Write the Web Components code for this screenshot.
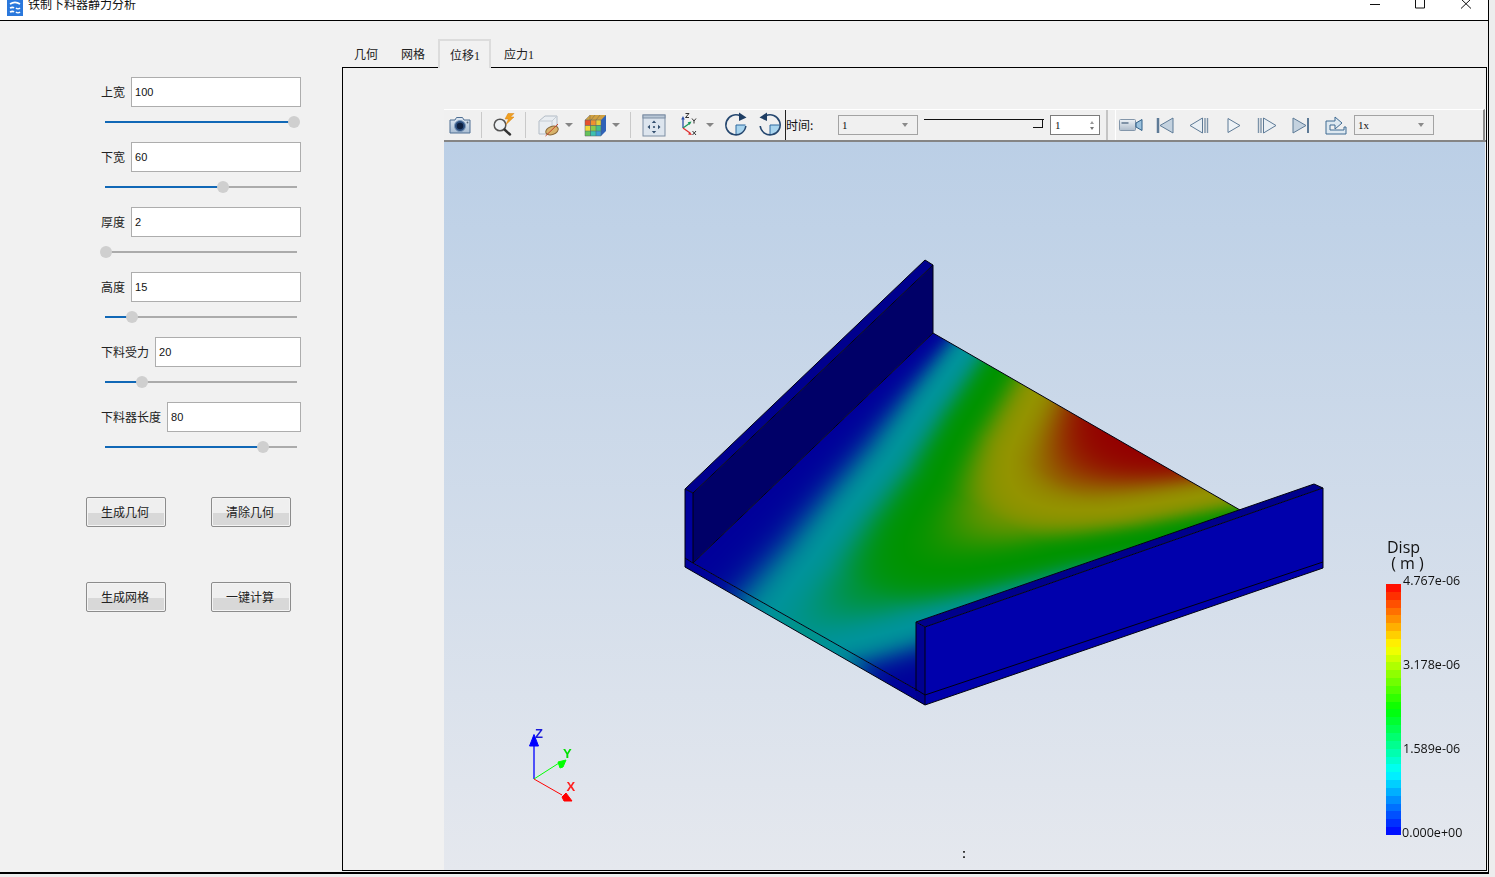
<!DOCTYPE html>
<html lang="zh-CN">
<head>
<meta charset="utf-8">
<title>铁制下料器静力分析</title>
<style>
  html, body { margin: 0; height: 100%; overflow: hidden; background: #ededed; }
  body { font-family: "Noto Sans CJK SC", "Liberation Sans", sans-serif; }
</style>
</head>
<body>
<app-window></app-window>

<script>
const CJK = '"Noto Sans CJK SC", sans-serif';

// title bar, cut off at the top edge of the screenshot
class TitleBar extends HTMLElement {
  constructor() {
    super();
    this.attachShadow({ mode: 'open' }).innerHTML = `
      <style>
        :host {
          display: flex;
          align-items: flex-end;
          height: 20px;
          box-sizing: border-box;
          padding: 0 0 8px 7px;
          background: #fff;
          overflow: hidden;
          font: 12px/16px ${CJK};
          color: #111;
        }
        .logo { width: 16px; height: 16px; flex: none; margin-bottom: -4px; }
        .name { margin-left: 5px; margin-bottom: 0; }
        .ctl { margin-left: auto; width: 120px; height: 20px; flex: none; margin-bottom: -8px; }
      </style>
      <svg class="logo" viewBox="0 0 16 16">
        <rect width="16" height="16" fill="#2a78dc"/>
        <path d="M3 4c3-2 7-2 10 0M3 8c2-1 3-1 4 0M9 8c1 1 3 1 4 0M3 12c2-1 3-1 4 0M9 12c1 1 3 1 4 0" stroke="#fff" stroke-width="1.600" fill="none"/>
      </svg>
      <span class="name">铁制下料器静力分析</span>
      <svg class="ctl" viewBox="0 0 120 20">
        <path d="M2 4.500h10" stroke="#111" fill="none"/>
        <path d="M47.500 -3h9v11h-9z" stroke="#111" fill="none"/>
        <path d="M93 -1l10 9.500M103 -1l-10 9.500" stroke="#111" fill="none"/>
      </svg>`;
  }
}
customElements.define('title-bar', TitleBar);

class ParamField extends HTMLElement {
  constructor() {
    super();
    this.attachShadow({ mode: 'open' });
  }
  connectedCallback() {
    const pos = this.getAttribute('pos');
    this.shadowRoot.innerHTML = `
      <style>
        :host { display: block; height: 65px; margin-left: 101px; width: 200px; }
        .row { display: flex; align-items: center; gap: 6px; height: 30px; }
        .label { font: 12px/16px ${CJK}; color: #222; white-space: nowrap; }
        .input {
          flex: 1; height: 30px; box-sizing: border-box;
          border: 1px solid #adadad; background: #fff;
          padding: 0 3px; font: 11px/28px "Liberation Sans", sans-serif; color: #111;
        }
        .slider { position: relative; width: 192px; height: 2px; margin: 14px 0 0 4px; background: #ababab; }
        .fill { height: 2px; background: #1168b6; width: ${pos}px; }
        .knob {
          position: absolute; top: -5px; left: ${pos - 6}px; width: 12px; height: 12px;
          border-radius: 50%; background: #cfcfcf;
        }
      </style>
      <div class="row">
        <span class="label">${this.getAttribute('label')}</span>
        <div class="input">${this.getAttribute('value')}</div>
      </div>
      <div class="slider"><div class="fill"></div><div class="knob"></div></div>`;
  }
}
customElements.define('param-field', ParamField);

class PushButton extends HTMLElement {
  constructor() {
    super();
    this.attachShadow({ mode: 'open' }).innerHTML = `
      <style>
        :host {
          display: block; width: 80px; height: 30px; box-sizing: border-box;
          border: 1px solid #8c8c8c; border-radius: 2px; padding-right: 2px;
          background: linear-gradient(#efefef 0, #efefef 15px, #d8d8d8 15px, #d8d8d8 100%);
          box-shadow: inset 0 0 0 1px #f4f4f4;
          text-align: center; font: 12px/28px ${CJK}; color: #222;
        }
      </style>
      <slot></slot>`;
  }
}
customElements.define('push-button', PushButton);

class ParamPanel extends HTMLElement {
  constructor() {
    super();
    this.attachShadow({ mode: 'open' }).innerHTML = `
      <style>
        :host { display: block; width: 342px; flex: none; padding-top: 56px; box-sizing: border-box; }
        .btns {
          display: grid; grid-template-columns: 80px 80px; column-gap: 45px; row-gap: 55px;
          margin: 30px 0 0 86px;
        }
      </style>
      <param-field label="上宽" value="100" pos="189"></param-field>
      <param-field label="下宽" value="60" pos="118"></param-field>
      <param-field label="厚度" value="2" pos="1"></param-field>
      <param-field label="高度" value="15" pos="27"></param-field>
      <param-field label="下料受力" value="20" pos="37"></param-field>
      <param-field label="下料器长度" value="80" pos="158"></param-field>
      <div class="btns">
        <push-button>生成几何</push-button>
        <push-button>清除几何</push-button>
        <push-button>生成网格</push-button>
        <push-button>一键计算</push-button>
      </div>`;
  }
}
customElements.define('param-panel', ParamPanel);

// the blue quarter both rotate buttons have in the middle of the circle
const QUARTER = `<path d="M12 12h9.500A9.500 9.500 0 0 1 12 21.500z" fill="#a8d4ee"/><path d="M12 12v9.500M12 12h9.500" stroke="#2f6aa0" fill="none"/>`;

// 24x24 toolbar pictures
const ICONS = {
  camera: `<defs><linearGradient id="cam" x1="0" y1="0" x2="0" y2="1"><stop offset="0" stop-color="#dfe9f3"/><stop offset="1" stop-color="#a9bdd3"/></linearGradient></defs>
    <path d="M2 7h5l1.500-2.500h6L16 7h6v13H2z" fill="url(#cam)" stroke="#4f6f93" stroke-linejoin="round"/>
    <circle cx="12" cy="13" r="5.500" fill="#2c4f7f" stroke="#7f9cbd"/><circle cx="12" cy="13" r="3.200" fill="#0d1f3f"/>
    <circle cx="19.500" cy="9.500" r="0.900" fill="#567"/>`,
  search: `<circle cx="9" cy="12" r="5.800" fill="#eef1f4" stroke="#555" stroke-width="1.500"/>
    <path d="M13.500 16.500l5.500 5" stroke="#333" stroke-width="2.400" stroke-linecap="round"/>
    <path d="M17 0.500l6 0-3.500 3.500h3.500l-8 7.500 2.500-5.500h-3.500z" fill="#f0a020" stroke="#d98010" stroke-width="0.500"/>`,
  clipbox: `<path d="M3 8l6-5h12v13l-5 5H3z" fill="#e9edf1" stroke="#b3bcc6"/><path d="M3 8h13v13M16 8l5-5" stroke="#c4ccd4" fill="none"/>
    <ellipse cx="16" cy="17.500" rx="6.500" ry="4" fill="#d8b26a" stroke="#8a6a3a" transform="rotate(-20 16 17.500)"/>
    <path d="M9.500 23L22 11" stroke="#c8442c" stroke-width="1"/>`,
  cube: `<path d="M2 7l5-5h16v16l-5 5H2z" fill="#2f62b8"/>
    <rect x="2" y="7" width="5.500" height="5.500" fill="#e8502c"/><rect x="7.500" y="7" width="5.500" height="5.500" fill="#f09030"/><rect x="13" y="7" width="5" height="5.500" fill="#e8cf3c"/>
    <rect x="2" y="12.500" width="5.500" height="5.500" fill="#f0d83a"/><rect x="7.500" y="12.500" width="5.500" height="5.500" fill="#8ccb4a"/><rect x="13" y="12.500" width="5" height="5.500" fill="#44c08a"/>
    <rect x="2" y="18" width="5.500" height="5" fill="#66c25a"/><rect x="7.500" y="18" width="5.500" height="5" fill="#3cc0b0"/><rect x="13" y="18" width="5" height="5" fill="#3a9ad8"/>
    <path d="M2 7l5-5h16l-5 5z" fill="#d0a040"/><path d="M7 2v5M12 2l-4 5M17 2l-4 5" stroke="#555" stroke-width="0.400"/>
    <path d="M2 7h16v16H2zM7.500 7v16M13 7v16M2 12.500h16M2 18h16" stroke="#55606a" stroke-width="0.500" fill="none"/>`,
  fit: `<rect x="1" y="2" width="22" height="21" fill="#dde5ee" stroke="#7c8ea3"/><rect x="1" y="2" width="22" height="3" fill="#b9c7d6" stroke="#7c8ea3"/>
    <circle cx="12" cy="14" r="1.100" fill="#34506f"/>
    <path d="M12 7.500l-2.200 2.500h4.400zM12 20.500l-2.200-2.500h4.400zM5.500 14l2.500-2.200v4.400zM18.500 14l-2.500-2.200v4.400z" fill="#34506f"/>`,
  axes: `<path d="M9 15V5" stroke="#2b4fa8" stroke-width="1.300"/><path d="M9 3l-1.800 3.500h3.600z" fill="#2b4fa8"/>
    <path d="M9 15l7-5" stroke="#1a9a5a" stroke-width="1.300"/><path d="M17.500 8.500l-3.800 0.800 2 2.600z" fill="#1a9a5a"/>
    <path d="M9 15l7 5" stroke="#e03030" stroke-width="1.300"/><path d="M18 22l-3.900-0.500 1.700-2.700z" fill="#e03030"/>
    <path d="M11.500 0.500h3.500l-3.500 4h3.500M18 5.500l2 2.500 2-2.500M20 8v2.500M18.500 18l3.500 4M22 18l-3.500 4" stroke="#333" stroke-width="1" fill="none"/>`,
  rotcw: `${QUARTER}<path d="M21.800 13A10 10 0 1 1 16.500 3" stroke="#25476f" stroke-width="1.600" fill="none"/>
    <path d="M15 -0.500l7.500 5-7.500 3.500z" fill="#1e3d63"/>`,
  rotccw: `${QUARTER}<path d="M2.200 13A10 10 0 1 0 7.500 3" stroke="#25476f" stroke-width="1.600" fill="none"/>
    <path d="M9 -0.500L1.500 4.500 9 8z" fill="#1e3d63"/>`,
  video: `<defs><linearGradient id="vid" x1="0" y1="0" x2="0" y2="1"><stop offset="0" stop-color="#eef2f6"/><stop offset="1" stop-color="#aebccb"/></linearGradient></defs>
    <rect x="0.500" y="6.500" width="16" height="11" rx="1" fill="url(#vid)" stroke="#8396aa"/><rect x="2.500" y="9" width="7" height="2" fill="#7f92a6"/>
    <path d="M17 10l6-3.500v11l-6-3.500z" fill="#9cc2dd" stroke="#2f5f88"/>`,
  first: `<path d="M4.500 5v15M5.500 5v15" stroke="#5d7a96" fill="none" stroke-width="1.500"/><path d="M20 5v15L7 12.500z" fill="#c4d2df" stroke="#5d7a96"/>`,
  prev: `<path d="M15.500 5v15L3 12.500z" fill="#e9eff4" stroke="#5d7a96"/><path d="M18 5v15M20.500 5v15" stroke="#7c93a9" stroke-width="1.400" fill="none"/>`,
  play: `<path d="M6 5.500v14l12-7z" fill="#eef3f7" stroke="#5d7a96"/>`,
  next: `<path d="M8.500 5v15L21 12.500z" fill="#e9eff4" stroke="#5d7a96"/><path d="M3.500 5v15M6 5v15" stroke="#7c93a9" stroke-width="1.400" fill="none"/>`,
  last: `<path d="M4 5v15l13-7.500z" fill="#c4d2df" stroke="#5d7a96"/><path d="M19 5v15" stroke="#5d7a96" stroke-width="2" fill="none"/>`,
  share: `<path d="M3 8h9V4l7 6-7 6v-4H7v5h14v-3h2v7H3z" fill="#dde8f0" stroke="#3f6a92"/>`
};

class ToolIcon extends HTMLElement {
  connectedCallback() {
    if (this.shadowRoot) return;
    this.attachShadow({ mode: 'open' }).innerHTML = `
      <style>
        :host { display: block; width: 24px; height: 24px; flex: none; }
        svg { display: block; overflow: visible; }
      </style>
      <svg width="24" height="24" viewBox="0 0 24 24">${ICONS[this.getAttribute('name')]}</svg>`;
  }
}
customElements.define('tool-icon', ToolIcon);

class ComboBox extends HTMLElement {
  constructor() {
    super();
    this.attachShadow({ mode: 'open' }).innerHTML = `
      <style>
        :host {
          display: flex; align-items: center; justify-content: space-between;
          width: 80px; height: 20px; box-sizing: border-box; flex: none;
          border: 1px solid #a3a3a3; padding: 0 9px 0 3px;
          font: 11px/18px "Liberation Serif", serif; color: #111;
        }
        i { width: 0; height: 0; border: 3.5px solid transparent; border-top: 4px solid #8a8a8a; border-bottom: 0; }
      </style>
      <slot></slot><i></i>`;
  }
}
customElements.define('combo-box', ComboBox);

class SpinBox extends HTMLElement {
  constructor() {
    super();
    this.attachShadow({ mode: 'open' }).innerHTML = `
      <style>
        :host {
          display: flex; align-items: center; justify-content: space-between;
          width: 50px; height: 20px; box-sizing: border-box; flex: none;
          border: 1px solid #7c7c7c; background: #fff; padding: 0 5px 0 4px;
          font: 11px/18px "Liberation Serif", serif; color: #111;
        }
        .arrows { display: flex; flex-direction: column; gap: 3px; }
        i { display: block; width: 0; height: 0; border: 2px solid transparent; }
        .up { border-bottom: 3px solid #999; border-top: 0; }
        .down { border-top: 3px solid #777; border-bottom: 0; }
      </style>
      <slot></slot><span class="arrows"><i class="up"></i><i class="down"></i></span>`;
  }
}
customElements.define('spin-box', SpinBox);

class ViewToolbar extends HTMLElement {
  constructor() {
    super();
    const icon = (name, ml) => `<tool-icon name="${name}" style="margin-left:${ml}px"></tool-icon>`;
    const arrow = (ml) => `<i class="arrow" style="margin-left:${ml}px"></i>`;
    const sep = (ml) => `<i class="sep" style="margin-left:${ml}px"></i>`;
    this.attachShadow({ mode: 'open' }).innerHTML = `
      <style>
        :host {
          display: flex; height: 33px; box-sizing: border-box;
          background: #f0f0f0; border-top: 1px solid #fff; border-bottom: 2px solid #858585;
          width: 1042px;
        }
        .group { display: flex; align-items: center; height: 30px; }
        .one { width: 671px; flex: none; }
        .two {
          width: 370px; box-sizing: border-box; margin-top: -1px; height: 31px;
          border-left: 1px solid #fff; border-top: 1px solid #fff; border-right: 2px solid #8a8a8a;
        }
        .arrow { width: 0; height: 0; flex: none; border: 4px solid transparent; border-top: 4px solid #858585; border-bottom: 0; }
        .sep { width: 1px; height: 26px; background: #c9c9c9; flex: none; }
        .bar { width: 1px; height: 30px; background: #222; flex: none; margin-left: 3px; }
        .time { font: 12px/16px ${CJK}; color: #111; margin-left: 0; width: 52px; flex: none; white-space: nowrap; }
        .range { position: relative; width: 120px; height: 12px; margin-left: 6px; flex: none; margin-top: -1px; border-top: 1px solid #111; box-sizing: border-box; }
        .range::after {
          content: ""; position: absolute; right: 1px; top: -1px; width: 9px; height: 8px;
          border-right: 1px solid #111; border-bottom: 1px solid #111;
        }
        .spin { margin-left: 6px; }
        .end { width: 2px; height: 30px; background: #c4c4c4; flex: none; margin-left: 6px; }
      </style>
      <div class="group one">
        ${icon('camera', 4)}${sep(9)}${icon('search', 9)}${sep(10)}${icon('clipbox', 10)}${arrow(5)}
        ${icon('cube', 10)}${arrow(5)}${sep(10)}${icon('fit', 11)}${icon('axes', 8)}${arrow(8)}
        ${icon('rotcw', 10)}${icon('rotccw', 10)}<i class="bar"></i>
        <span class="time">时间:</span>
        <combo-box>1</combo-box>
        <div class="range"></div>
        <spin-box class="spin">1</spin-box>
        <i class="end"></i>
      </div>
      <div class="group two">
        ${icon('video', 3)}${icon('first', 10)}${icon('prev', 10)}${icon('play', 11)}${icon('next', 9)}${icon('last', 10)}${icon('share', 10)}
        <combo-box style="margin-left:7px">1x</combo-box>
      </div>`;
  }
}
customElements.define('view-toolbar', ViewToolbar);

// jet colour, with the flat bands the renderer shows at cyan, green and yellow
function jet(v) {
  const stops = [[0, 0, 1], [0, 1, 1], [0, 1, 0], [1, 1, 0], [1, 0, 0]];
  const x = Math.max(0, Math.min(1, v)) * 4;
  const i = Math.min(3, Math.floor(x));
  const f = x - i;
  return stops[i].map((c, k) => c + (stops[i + 1][k] - c) * f);
}
// height of the displacement bump along the plate, front to back
const RIDGE = [0.3, 0.4, 0.54, 0.66, 0.85, 1];
function field(s, t) {
  const x = t * 5;
  const i = Math.min(4, Math.floor(x));
  const h = RIDGE[i] + (RIDGE[i + 1] - RIDGE[i]) * (x - i);
  const p = 2 - t;
  return h * Math.pow(Math.max(0, Math.sin(Math.PI * s)), p);
}
function shaded(v) {
  const w = v - 0.7 * Math.sin(8 * Math.PI * v) / (8 * Math.PI);
  return jet(w).map((c) => c * 0.575 * 255);
}

class FeaScene extends HTMLElement {
  constructor() {
    super();
    this.attachShadow({ mode: 'open' }).innerHTML = `
      <style>
        :host {
          display: block; position: relative; width: 1041px; height: 728px;
          background: linear-gradient(#bbcfe6, #e5e8ee);
          overflow: hidden;
        }
        canvas { display: block; }
        .axes { position: absolute; left: 70px; top: 579px; }
        .axes text { font: bold 13px "Liberation Sans", sans-serif; }
        color-legend { position: absolute; left: 942px; top: 397px; }
        .mark { position: absolute; left: 518px; top: 704px; font: bold 12px/16px "Liberation Sans", sans-serif; color: #111; }
      </style>
      <canvas width="1042" height="729"></canvas>
      <svg class="axes" width="80" height="100" viewBox="514 721 80 100">
        <path d="M534 779V742" stroke="#0000ff" stroke-width="1.300"/>
        <path d="M534 734.500l4.500 11.500h-9z" fill="#0000ff" stroke="#0000ff" stroke-linejoin="round"/>
        <path d="M534 779l25-16" stroke="#00ff00" stroke-width="1"/>
        <path d="M558 762l8-2-3 7-3 1z" fill="#00ff00" stroke="#00ff00" stroke-linejoin="round"/>
        <path d="M534 779l28 16" stroke="#ff0000" stroke-width="1"/>
        <path d="M562 797l4-4 6 8h-8z" fill="#ff0000" stroke="#ff0000" stroke-linejoin="round"/>
        <text x="535" y="738" fill="#1a1ad8">Z</text>
        <text x="563" y="758" fill="#00e000">Y</text>
        <text x="566.500" y="791" fill="#ff2020">X</text>
      </svg>
      <color-legend></color-legend>
      <span class="mark">:</span>`;
  }
  connectedCallback() {
    const ctx = this.shadowRoot.querySelector('canvas').getContext('2d');
    ctx.translate(-444, -142);
    const poly = (pts, fill) => {
      ctx.beginPath();
      pts.forEach((p, i) => (i ? ctx.lineTo(p[0], p[1]) : ctx.moveTo(p[0], p[1])));
      ctx.closePath();
      if (fill) { ctx.fillStyle = fill; ctx.fill(); }
    };
    const line = (pts) => {
      ctx.beginPath();
      pts.forEach((p, i) => (i ? ctx.lineTo(p[0], p[1]) : ctx.moveTo(p[0], p[1])));
      ctx.strokeStyle = '#000010';
      ctx.lineWidth = 1;
      ctx.stroke();
    };

    // plate corners: front left, front right, back left, back right
    const A = [693, 563], B = [917, 690], C = [933, 333], D = [1315, 553];
    const img = ctx.createImageData(1042, 729);
    const N = 1500;
    for (let j = 0; j <= N; j++) {
      const t = j / N;
      for (let i = 0; i <= N; i++) {
        const s = i / N;
        const x = (1 - t) * (A[0] + s * (B[0] - A[0])) + t * (C[0] + s * (D[0] - C[0]));
        const y = (1 - t) * (A[1] + s * (B[1] - A[1])) + t * (C[1] + s * (D[1] - C[1]));
        const px = Math.round(x - 444), py = Math.round(y - 142);
        if (px < 0 || py < 0 || px >= 1042 || py >= 729) continue;
        const c = shaded(field(s, t));
        const o = (py * 1042 + px) * 4;
        // the cold parts stay a little brighter than the rest
        img.data[o] = c[0]; img.data[o + 1] = c[1]; img.data[o + 2] = c[2] * 1.05; img.data[o + 3] = 255;
      }
    }
    const off = document.createElement('canvas');
    off.width = 1042; off.height = 729;
    off.getContext('2d').putImageData(img, 0, 0);

    // front edge of the plate, coloured like the plate
    const strip = ctx.createLinearGradient(693, 563, 917, 690);
    for (let k = 0; k <= 20; k++) {
      const c = shaded(field(k / 20, 0));
      strip.addColorStop(k / 20, `rgb(${c[0] | 0},${c[1] | 0},${Math.min(255, c[2] * 1.05) | 0})`);
    }
    poly([[685, 558], [693, 563], [917, 690], [925, 695], [925, 705], [685, 567]], strip);

    // plate
    ctx.save();
    poly([A, C, [1240, 510], [916, 622], B]);
    ctx.clip();
    ctx.drawImage(off, 444, 142);
    ctx.restore();

    // left wall
    poly([[685, 489], [925, 260], [933, 265], [693, 493]], '#00008e');
    poly([[693, 493], [933, 265], [933, 333], [693, 563]], '#000068');
    poly([[685, 489], [693, 493], [693, 563], [685, 558]], '#00009c');
    poly([[685, 558], [693, 563], [690, 569], [685, 567]], '#00009c');

    // right wall
    poly([[916, 622], [1314, 484], [1323, 488], [925, 627]], '#00008c');
    poly([[925, 627], [1323, 488], [1323, 568], [925, 705]], '#0000ac');
    poly([[916, 622], [925, 627], [925, 705], [916, 700]], '#000090');

    line([[685, 489], [925, 260], [933, 265], [933, 333], [1240, 510]]);
    line([[685, 489], [693, 493], [933, 265]]);
    line([[685, 489], [685, 567], [925, 705]]);
    line([[693, 493], [693, 563], [933, 333]]);
    line([[685, 558], [693, 563], [917, 690], [925, 695]]);
    line([[916, 622], [1314, 484], [1323, 488], [925, 627], [916, 622], [916, 691]]);
    line([[925, 627], [925, 705], [1323, 568], [1323, 488]]);
    line([[925, 695], [1323, 562]]);
  }
}
customElements.define('fea-scene', FeaScene);

class ColorLegend extends HTMLElement {
  constructor() {
    super();
    const stops = [];
    const n = 32;
    for (let i = 0; i < n; i++) {
      const c = jet(1 - (i + 0.5) / n).map((v) => Math.round(v * 255));
      stops.push(`rgb(${c}) ${(i / n * 100).toFixed(2)}% ${((i + 1) / n * 100).toFixed(2)}%`);
    }
    this.attachShadow({ mode: 'open' }).innerHTML = `
      <style>
        :host { display: block; width: 90px; height: 300px; font-family: "Open Sans", "DejaVu Sans", sans-serif; color: #111; }
        .title { font-size: 16px; line-height: 16px; margin-left: 1px; }
        .scale { display: flex; margin-top: 13px; height: 251px; }
        .bar { width: 15px; background: linear-gradient(${stops.join(',')}); flex: none; }
        .ticks { margin: -10px 0 0 2px; height: 266px; display: flex; flex-direction: column; justify-content: space-between; font-size: 12.500px; line-height: 14px; }
        .ticks span:last-child { margin-left: -1px; }
      </style>
      <div class="title">Disp<br>&nbsp;( m )</div>
      <div class="scale">
        <div class="bar"></div>
        <div class="ticks"><span>4.767e-06</span><span>3.178e-06</span><span>1.589e-06</span><span>0.000e+00</span></div>
      </div>`;
  }
}
customElements.define('color-legend', ColorLegend);

class TabView extends HTMLElement {
  constructor() {
    super();
    this.attachShadow({ mode: 'open' }).innerHTML = `
      <style>
        :host { display: block; flex: 1; padding-top: 18px; box-sizing: border-box; min-width: 0; }
        .tabs { display: flex; height: 29px; box-sizing: border-box; font: 12px/16px "Liberation Serif", ${CJK}; color: #222; margin-bottom: -1px; position: relative; }
        .tab { padding: 8px 12px 0; height: 28px; box-sizing: border-box; white-space: nowrap; }
        .tab.active {
          height: 29px; margin: 0 1px; padding: 7px 9px 0 10px; background: #f1f1f1;
          border: 2px solid #dcdcdc; border-bottom: 0; position: relative; z-index: 1;
        }
        .box {
          border: 1px solid #000; height: 804px; box-sizing: border-box;
          padding: 41px 0 0 101px; width: 1145px; background: #f1f1f1;
        }
      </style>
      <div class="tabs">
        <span class="tab">几何</span><span class="tab" style="padding-left:11px">网格</span>
        <span class="tab active">位移1</span><span class="tab">应力1</span>
      </div>
      <div class="box">
        <view-toolbar></view-toolbar>
        <fea-scene></fea-scene>
      </div>`;
  }
}
customElements.define('tab-view', TabView);

class AppWindow extends HTMLElement {
  constructor() {
    super();
    this.attachShadow({ mode: 'open' }).innerHTML = `
      <style>
        :host {
          display: block; width: 1489px; height: 874px; box-sizing: border-box;
          border-right: 1px solid #000; border-bottom: 2px solid #000; background: #f1f1f1;
        }
        .body { display: flex; height: 852px; border-top: 1px solid #000; box-sizing: border-box; }
      </style>
      <title-bar></title-bar>
      <div class="body">
        <param-panel></param-panel>
        <tab-view></tab-view>
      </div>`;
  }
}
customElements.define('app-window', AppWindow);
</script>
</body>
</html>
